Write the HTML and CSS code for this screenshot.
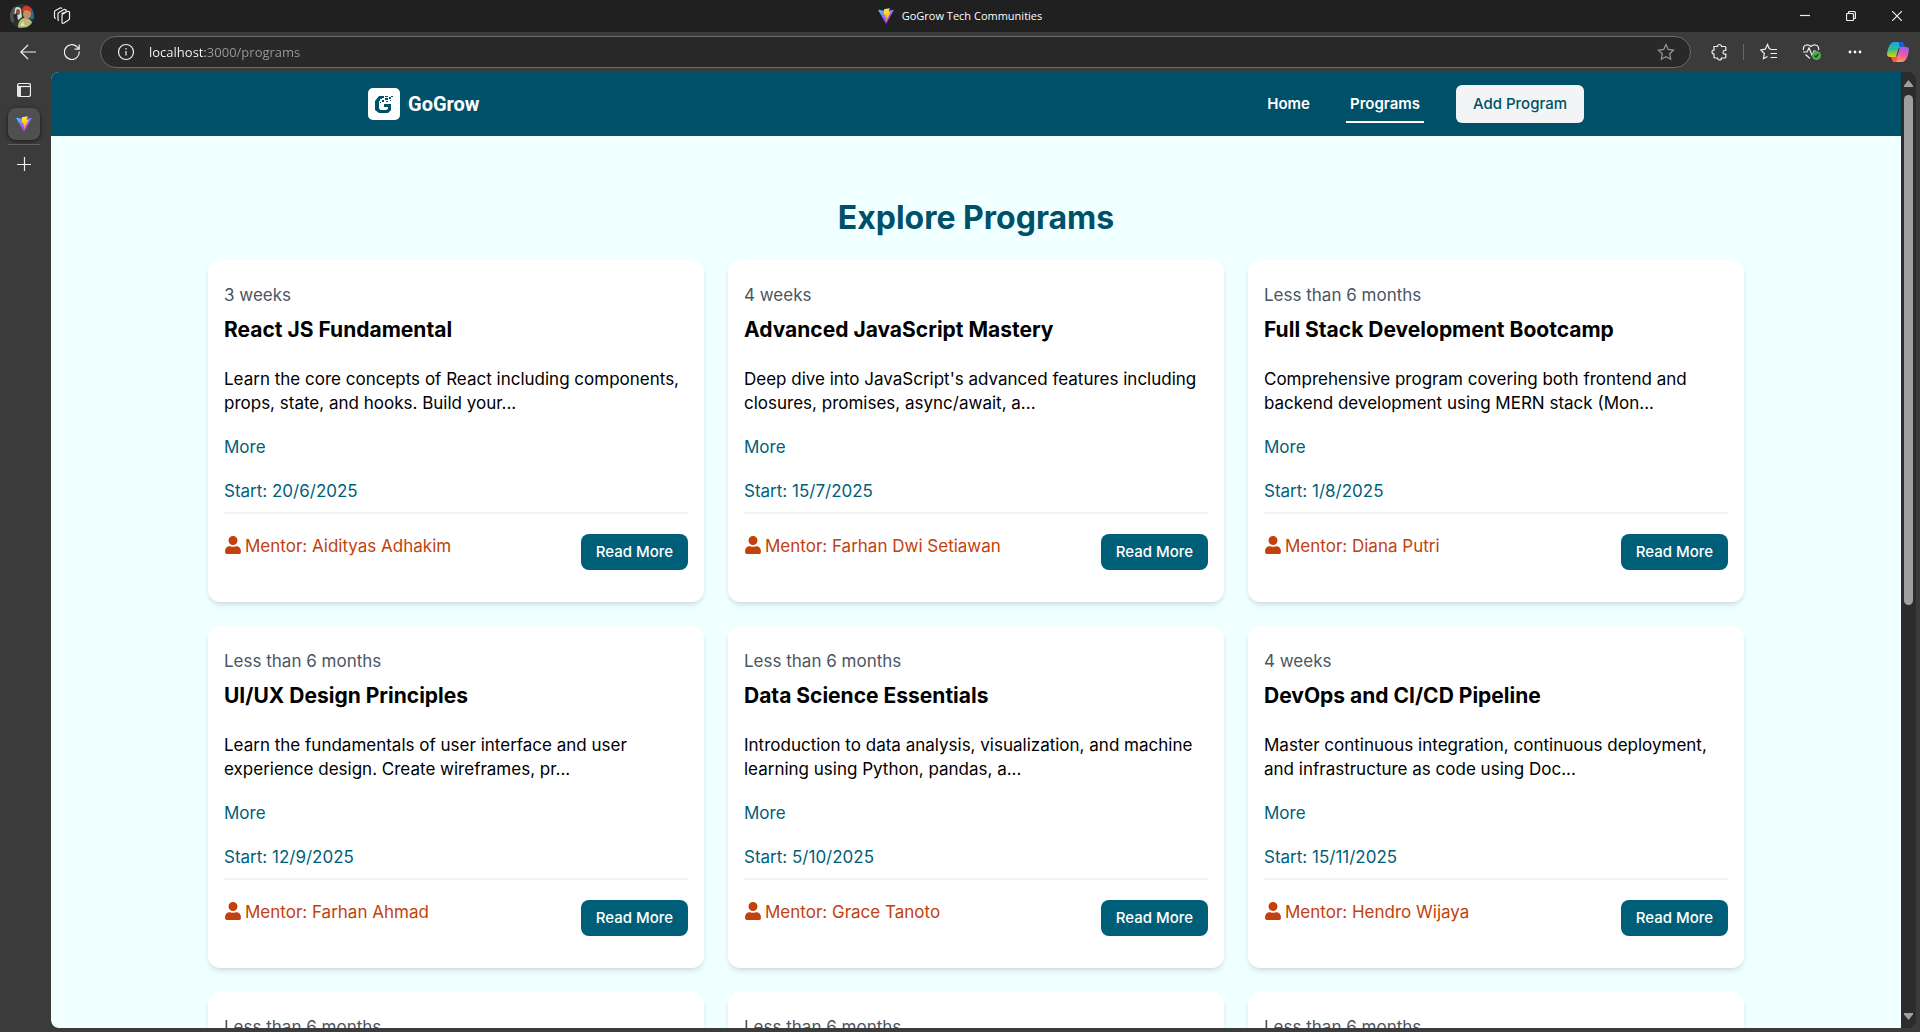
FILE: index.html
```html
<!DOCTYPE html>
<html lang="en">
<head>
<meta charset="utf-8">
<meta name="viewport" content="width=device-width, initial-scale=1">
<title>GoGrow Tech Communities</title>
<link rel="stylesheet" href="styles.css">
</head>
<body>
<svg class="defs" aria-hidden="true">
  <defs>
    <linearGradient id="vite-a" x1="0" y1="0" x2="0.6" y2="1"><stop offset="0" stop-color="#41d1ff"/><stop offset="0.5" stop-color="#8a6bff"/><stop offset="1" stop-color="#bd34fe"/></linearGradient>
    <linearGradient id="vite-b" x1="0.4" y1="0" x2="0.5" y2="1"><stop offset="0" stop-color="#ffea83"/><stop offset="0.2" stop-color="#ffdd35"/><stop offset="1" stop-color="#ffa800"/></linearGradient>
    <linearGradient id="cp-a" x1="0" y1="0" x2="0" y2="1"><stop offset="0" stop-color="#18a4f0"/><stop offset="0.5" stop-color="#2fbf8f"/><stop offset="1" stop-color="#f2c80f"/></linearGradient>
    <linearGradient id="cp-b" x1="0.6" y1="0" x2="0.3" y2="1"><stop offset="0" stop-color="#a55cf5"/><stop offset="0.5" stop-color="#ee5d9b"/><stop offset="1" stop-color="#ffa25c"/></linearGradient>
    <symbol id="vite" viewBox="0 0 410 404">
      <path d="M399.6 59.5 215.6 388.5c-3.8 6.8-13.5 6.8-17.4.1L10.6 59.6C6.4 52.2 12.7 43.3 21 44.7l184.2 32.9c1.200.2 2.400.2 3.500 0l180.300-32.900c8.300-1.500 14.700 7.400 10.600 14.800Z" fill="url(#vite-a)"/>
      <path d="M293 1.600 156.900 28.200c-2.200.4-3.900 2.300-4 4.600l-8.400 141.400c-.2 3.300 2.900 5.900 6.100 5.200l37.900-8.800c3.500-.8 6.700 2.300 6 5.900l-11.300 55.100c-.8 3.700 2.700 6.900 6.400 5.800l23.400-7.100c3.600-1.100 7.100 2.100 6.400 5.800l-17.900 86.600c-1.100 5.400 6.100 8.400 9.100 3.700l2-3.100 110.900-221.300c1.900-3.700-1.300-7.900-5.400-7.100l-39 7.500c-3.700.7-6.800-2.700-5.800-6.300L298.700 7.900c1-3.600-2.100-7-5.700-6.300Z" fill="url(#vite-b)"/>
    </symbol>
    <symbol id="user" viewBox="0 0 448 512"><path fill="currentColor" d="M224 256a128 128 0 1 0 0-256 128 128 0 0 0 0 256Zm96 32h-17c-48 22-110 22-158 0h-17C60 288 0 345 0 416v48c0 26 22 48 48 48h352c26 0 48-22 48-48v-48c0-71-57-128-128-128Z"/></symbol>
  </defs>
</svg>

<header class="titlebar">
  <div class="titlebar-side">
    <button class="icon-btn" aria-label="Profile">
      <svg width="24" height="24" viewBox="0 0 24 24">
        <clipPath id="round"><circle cx="12" cy="12" r="12"/></clipPath>
        <g clip-path="url(#round)">
          <rect width="24" height="24" fill="#27382f"/>
          <path d="M0 3h8l3 6-5 8-6 2Z" fill="#4e5648"/>
          <path d="M5 5c1-3 5-2 6 0l1 8-5 4-3-3Z" fill="#d3d8d0"/>
          <ellipse cx="8" cy="8" rx="2" ry="3" fill="#7c5542"/>
          <path d="M3 11l4-2 1 8-3 2Z" fill="#242c2b"/>
          <path d="M19 4l5-1v12h-4Z" fill="#2b6f87"/>
          <path d="M8 24c0-7 3-10 7-10s8 3 8 9Z" fill="#b9bb78"/>
          <ellipse cx="17" cy="10" rx="4" ry="5" fill="#c88d60"/>
          <path d="M12 6c1-6 9-6 10 0l-2 1-5-1-3 2Z" fill="#d13a28"/>
          <path d="M10 22l3-5 2 5Z" fill="#e2dfa5"/>
        </g>
      </svg>
    </button>
    <button class="icon-btn" aria-label="Workspaces">
      <svg class="line" width="18" height="18" viewBox="0 0 18 18"><path d="M8.500 6.500 14 4.500q2.500-.5 2.500 1v6q0 1-1 1.500l-4.500 3q-2 1-2-1V8.500q0-1 1-1.500l4-2.500M6 13.500q-1 0-1-1V7q0-1 1-1.500l5-3q1-.5 2 .5v1M3 11.500q-1.500 0-1.500-1.500V5q0-1 1-1.500l4.500-2.500q1-.5 2 .5"/></svg>
    </button>
  </div>
  <div class="titlebar-name">
    <svg width="16" height="16"><use href="#vite"/></svg>
    <span>GoGrow Tech Communities</span>
  </div>
  <div class="window-controls">
    <button aria-label="Minimize"><svg class="line" width="10" height="10" viewBox="0 0 10 10"><path d="M0 4.500h10"/></svg></button>
    <button aria-label="Restore"><svg class="line" width="10" height="10" viewBox="0 0 10 10"><rect x=".5" y="2.500" width="7" height="7" rx="1"/><path d="M2.500 2V1.500q0-1 1-1h4q2 0 2 2v4q0 1-1 1H8"/></svg></button>
    <button aria-label="Close"><svg class="line" width="10" height="10" viewBox="0 0 10 10"><path d="M0 0l10 10M10 0 0 10"/></svg></button>
  </div>
</header>

<div class="toolbar">
  <div class="tools tools-left">
    <button class="icon-btn" aria-label="Back"><svg class="line" width="16" height="16" viewBox="0 0 16 16"><path d="M16 8H.8M8 1 .8 8 8 15"/></svg></button>
    <button class="icon-btn" aria-label="Refresh"><svg class="line" width="16" height="16" viewBox="0 0 16 16"><path d="M15.200 7.500A7.400 7.400 0 1 1 13 2.800L15 5M15.200.5V5.200H10.500"/></svg></button>
  </div>
  <div class="address">
    <svg class="line" width="18" height="18" viewBox="0 0 18 18"><circle cx="9" cy="9" r="7.500"/><path d="M9 8v4.500M9 5v1.500"/></svg>
    <input class="address-input" type="text" aria-label="Address" value="localhost:3000/programs">
    <button class="star-btn" aria-label="Add to favorites"><svg class="line" width="18" height="18" viewBox="0 0 18 18"><path d="M9 1.500l2.300 4.900 5.200.7-3.800 3.700 1 5.400L9 13.600l-4.700 2.600 1-5.400L1.500 7.100l5.200-.7Z"/></svg></button>
  </div>
  <div class="tools">
    <button class="icon-btn" aria-label="Extensions"><svg class="line" width="18" height="18" viewBox="0 0 18 18"><path d="M4 3.500h3.500a2 2 0 0 1 4 0H15q.8 0 .8 1V7.500h-1a1.800 1.800 0 0 0 0 3.600h1V14q0 1-1 1h-3.300a2 2 0 0 1-4 0H5q-1 0-1-1v-2.900a2 2 0 1 1 0-4Z"/></svg></button>
  </div>
  <div class="tool-divider"></div>
  <div class="tools">
    <button class="icon-btn" aria-label="Favorites"><svg class="line" width="18" height="18" viewBox="0 0 18 18"><path d="M11 6 9.300 5.800 7.500 1.500 5.300 6.200.8 7l3.500 3.500-.8 5.200 4-2.200M10.500 6.500H17M10.500 10.500H17M10.500 14.500H17"/></svg></button>
    <button class="icon-btn" aria-label="Browser essentials"><svg class="line" width="20" height="18" viewBox="0 0 20 18"><path d="M1.500 7C.5 2 6 .5 9 3.500 12 .5 17.500 2 16.500 7M1 9h4l2-4 3 7 2-4h2M3.500 11.500 8 15.500"/><circle cx="14.500" cy="12.500" r="4.500" fill="#4caf50" stroke="none"/><path d="M12.500 12.500l1.500 1.500 2.500-3" stroke="#18351a"/></svg></button>
    <button class="icon-btn" aria-label="More"><svg width="14" height="4" viewBox="0 0 14 4" fill="#fff"><circle cx="2" cy="2" r="1.400"/><circle cx="7" cy="2" r="1.400"/><circle cx="12" cy="2" r="1.400"/></svg></button>
    <button class="icon-btn" aria-label="Copilot"><svg width="22" height="20" viewBox="0 0 22 20"><path d="M7 0h7q2 0 2.700 2l1 3H14q-2 0-2.700 2L9 15H3Q0 15 0 12 1 5 3.500 2 5 0 7 0Z" fill="url(#cp-a)"/><path d="M12 0h2q2 0 2.700 2l1 3H14q-2 0-2-2Z" fill="#2257d6"/><path d="M15 20H8q-2 0-2.700-2l-1-3H8q2 0 2.700-2L13 5h6q3 0 3 3-1 7-3.500 10-1.500 2-3.500 2Z" fill="url(#cp-b)"/><path d="M4.300 15H8q2 0 2.500-1L10 19q-1 1-2 1-2 0-2.700-2Z" fill="#f25a3c"/></svg></button>
  </div>
</div>

<div class="workspace">
  <aside class="tab-rail" aria-label="Tabs">
    <button class="rail-btn" aria-label="Tab actions"><svg class="line" width="14" height="14" viewBox="0 0 14 14"><rect x=".5" y=".5" width="13" height="13" rx="2"/><path d="M.5 3.500h13"/><path d="M0 4h4v10H2q-2 0-2-2Z" fill="#e6e6e6" stroke="none"/></svg></button>
    <button class="rail-btn rail-btn-active" aria-label="GoGrow Tech Communities"><svg width="16" height="16"><use href="#vite"/></svg></button>
    <div class="rail-divider"></div>
    <button class="rail-btn" aria-label="New tab"><svg class="line" width="14" height="14" viewBox="0 0 14 14"><path d="M0 7.500h14M7.500 0v14"/></svg></button>
  </aside>

  <div class="viewport">
    <div class="page">
      <nav class="navbar">
        <div class="navbar-inner">
          <a class="brand" href="#">
            <svg width="32" height="32" viewBox="0 0 32 32"><rect width="32" height="32" rx="5" fill="#fff"/><g fill="#005069"><path d="M11 8h5v2h-2v1h-2v2h-1v7l1 2h6l2-1v-2h-4v-3h7v6l-3 3h-9l-4-3v-9Z"/><path d="M17 8h3v1h-3zM17 10h3v2h-3zM21 9h2v2h-2zM23 8h2v1h-2zM14 12h2v2h-2zM18 13h2v1h-2zM12 14h1v1h-1zM22 12h1v1h-1z"/></g></svg>
            <span>GoGrow</span>
          </a>
          <div class="nav-links">
            <a class="nav-link" href="#">Home</a>
            <a class="nav-link nav-link-active" href="#" aria-current="page">Programs</a>
            <button class="add-btn">Add Program</button>
          </div>
        </div>
      </nav>

      <main class="programs">
        <h1>Explore Programs</h1>
        <div class="grid">
          <article class="card">
            <p class="duration">3 weeks</p>
            <h2>React JS Fundamental</h2>
            <p class="summary">Learn the core concepts of React including components, props, state, and hooks. Build your...</p>
            <a class="more" href="#">More</a>
            <p class="start">Start: 20/6/2025</p>
            <div class="card-foot"><p class="mentor"><svg width="16" height="18"><use href="#user"/></svg>Mentor: Aidityas Adhakim</p><button class="read-btn">Read More</button></div>
          </article>
          <article class="card">
            <p class="duration">4 weeks</p>
            <h2>Advanced JavaScript Mastery</h2>
            <p class="summary">Deep dive into JavaScript's advanced features including closures, promises, async/await, a...</p>
            <a class="more" href="#">More</a>
            <p class="start">Start: 15/7/2025</p>
            <div class="card-foot"><p class="mentor"><svg width="16" height="18"><use href="#user"/></svg>Mentor: Farhan Dwi Setiawan</p><button class="read-btn">Read More</button></div>
          </article>
          <article class="card">
            <p class="duration">Less than 6 months</p>
            <h2>Full Stack Development Bootcamp</h2>
            <p class="summary">Comprehensive program covering both frontend and backend development using MERN stack (Mon...</p>
            <a class="more" href="#">More</a>
            <p class="start">Start: 1/8/2025</p>
            <div class="card-foot"><p class="mentor"><svg width="16" height="18"><use href="#user"/></svg>Mentor: Diana Putri</p><button class="read-btn">Read More</button></div>
          </article>
          <article class="card">
            <p class="duration">Less than 6 months</p>
            <h2>UI/UX Design Principles</h2>
            <p class="summary">Learn the fundamentals of user interface and user experience design. Create wireframes, pr...</p>
            <a class="more" href="#">More</a>
            <p class="start">Start: 12/9/2025</p>
            <div class="card-foot"><p class="mentor"><svg width="16" height="18"><use href="#user"/></svg>Mentor: Farhan Ahmad</p><button class="read-btn">Read More</button></div>
          </article>
          <article class="card">
            <p class="duration">Less than 6 months</p>
            <h2>Data Science Essentials</h2>
            <p class="summary">Introduction to data analysis, visualization, and machine learning using Python, pandas, a...</p>
            <a class="more" href="#">More</a>
            <p class="start">Start: 5/10/2025</p>
            <div class="card-foot"><p class="mentor"><svg width="16" height="18"><use href="#user"/></svg>Mentor: Grace Tanoto</p><button class="read-btn">Read More</button></div>
          </article>
          <article class="card">
            <p class="duration">4 weeks</p>
            <h2>DevOps and CI/CD Pipeline</h2>
            <p class="summary">Master continuous integration, continuous deployment, and infrastructure as code using Doc...</p>
            <a class="more" href="#">More</a>
            <p class="start">Start: 15/11/2025</p>
            <div class="card-foot"><p class="mentor"><svg width="16" height="18"><use href="#user"/></svg>Mentor: Hendro Wijaya</p><button class="read-btn">Read More</button></div>
          </article>
          <article class="card"><p class="duration">Less than 6 months</p></article>
          <article class="card"><p class="duration">Less than 6 months</p></article>
          <article class="card"><p class="duration">Less than 6 months</p></article>
        </div>
      </main>
    </div>
    <div class="scrollbar" aria-hidden="true">
      <svg width="9" height="7" viewBox="0 0 9 7"><path d="M4.500 0 9 5.500V7H0V5.500Z" fill="#9f9f9f"/></svg>
      <div class="scroll-track"><div class="scroll-thumb"></div></div>
      <svg width="9" height="7" viewBox="0 0 9 7"><path d="M4.500 7 9 1.500V0H0V1.500Z" fill="#9f9f9f"/></svg>
    </div>
  </div>
</div>
</body>
</html>
```

FILE: styles.css
```css
:root {
  --chrome: #3b3b3b;
  --teal-dark: #005069;
  --teal: #005f78;
  --rust: #c2410c;
  --ui: "Open Sans", "Noto Sans", sans-serif;
  --body: Inter, "Open Sans", sans-serif;
}

* { box-sizing: border-box; margin: 0; }

body {
  display: flex;
  flex-direction: column;
  height: 100vh;
  overflow: hidden;
  background: var(--chrome);
  color: #000;
  font: 17px/24px var(--body);
}

button {
  display: flex;
  align-items: center;
  justify-content: center;
  padding: 0;
  border: 0;
  background: none;
  font: inherit;
  color: inherit;
}

a { color: inherit; text-decoration: none; }
svg { flex: none; display: block; }
.defs { position: absolute; width: 0; height: 0; }
.line { fill: none; stroke: #f0f0f0; stroke-width: 1.2; }

/* Browser frame */
.titlebar {
  flex: none;
  display: grid;
  grid-template-columns: 1fr auto 1fr;
  align-items: center;
  height: 32px;
  background: #202020;
  color: #fff;
  font: 11px/16px var(--ui);
}
.titlebar-side { display: flex; gap: 4px; padding-left: 4px; }
.titlebar-name { display: flex; align-items: center; gap: 8px; }
.window-controls { display: flex; justify-content: flex-end; }
.window-controls button { width: 46px; height: 32px; }
.icon-btn { width: 36px; height: 32px; }

.toolbar {
  flex: none;
  display: flex;
  align-items: center;
  height: 40px;
  padding: 0 4px 0 10px;
}
.tools { display: flex; gap: 7px; }
.tools-left { gap: 8px; }
.tool-divider { width: 1px; height: 16px; margin: 0 7px 0 6px; background: #666; }
.address {
  flex: 1;
  display: flex;
  align-items: center;
  height: 32px;
  margin: 0 10px;
  padding: 0 15px 0 16px;
  gap: 14px;
  border: 1px solid #6a6a6a;
  border-radius: 16px;
  background: #292929;
}
.address-input {
  flex: 1;
  min-width: 0;
  height: 24px;
  padding: 0;
  border: 0;
  outline: 0;
  /* host name in white, port and path dimmed */
  background: linear-gradient(90deg, #fff 56px, #9a9a9a 56px);
  -webkit-background-clip: text;
  background-clip: text;
  color: transparent;
  caret-color: #fff;
  font: 13px/24px var(--ui);
}
.star-btn .line { stroke: #9a9a9a; }

.workspace { flex: 1; display: flex; min-height: 0; padding: 0 4px 4px 0; }
.tab-rail { flex: none; width: 51px; padding: 2px 11px 0 8px; }
.rail-btn { width: 32px; height: 32px; margin-bottom: 2px; }
.rail-btn-active {
  margin-bottom: 4px;
  border-radius: 8px;
  background: #505050;
  box-shadow: 0 1px 4px rgba(0, 0, 0, 0.6);
}
.rail-divider { height: 1px; margin-bottom: 3px; background: #626262; }

.viewport {
  flex: 1;
  display: flex;
  min-width: 0;
  overflow: hidden;
  border-radius: 8px;
  background: #2c2c2c;
}
.page { flex: 1; min-width: 0; overflow: hidden; background: #f0ffff; }
.scrollbar {
  flex: none;
  display: flex;
  flex-direction: column;
  width: 15px;
  padding: 8px 3px;
  gap: 8px;
}
.scroll-track { flex: 1; }
.scroll-thumb { height: 56%; border-radius: 5px; background: #9f9f9f; }

/* Site navigation */
.navbar { background: var(--teal-dark); color: #fff; }
.navbar-inner {
  display: flex;
  align-items: center;
  justify-content: space-between;
  max-width: 1280px;
  height: 64px;
  margin: 0 auto;
  padding: 0 32px;
}
.brand { display: flex; align-items: center; gap: 8px; font: 700 20px/28px Roboto, sans-serif; }
.nav-links { display: flex; align-items: center; gap: 32px; font-size: 15px; line-height: 20px; }
.nav-link { padding: 9px 4px 7px; border-bottom: 2px solid transparent; font-weight: 600; }
.nav-link-active { border-color: #fff; }
.add-btn {
  width: 128px;
  height: 38px;
  border-radius: 6px;
  background: #f3f4f6;
  color: var(--teal-dark);
  font-weight: 500;
}

/* Program list */
.programs { max-width: 1536px; margin: 0 auto; padding: 64px 0; }
h1 {
  margin-bottom: 24px;
  color: var(--teal-dark);
  font-size: 32px;
  line-height: 36px;
  text-align: center;
}
.grid { display: grid; grid-template-columns: repeat(3, 1fr); gap: 24px; }
.card {
  padding: 23px 16px 32px;
  border-radius: 12px;
  background: #fff;
  box-shadow: 0 4px 6px -1px rgba(0, 0, 0, 0.1), 0 2px 4px -2px rgba(0, 0, 0, 0.1);
}
.duration { margin-bottom: 9px; color: #4b5563; }
h2 { margin-bottom: 23px; font-size: 21px; line-height: 28px; }
.summary { margin-bottom: 20px; }
.more { display: block; width: fit-content; margin-bottom: 20px; color: var(--teal); }
.start { padding-bottom: 9px; border-bottom: 2px solid #f3f4f6; color: var(--teal); }
.card-foot { display: flex; justify-content: space-between; padding-top: 20px; }
.mentor { display: flex; gap: 4px; padding-left: 1px; color: var(--rust); }
.mentor svg { margin-top: 2px; }
.read-btn {
  width: 107px;
  height: 36px;
  border-radius: 8px;
  background: var(--teal);
  color: #fff;
  font-size: 15px;
  font-weight: 500;
}
```
